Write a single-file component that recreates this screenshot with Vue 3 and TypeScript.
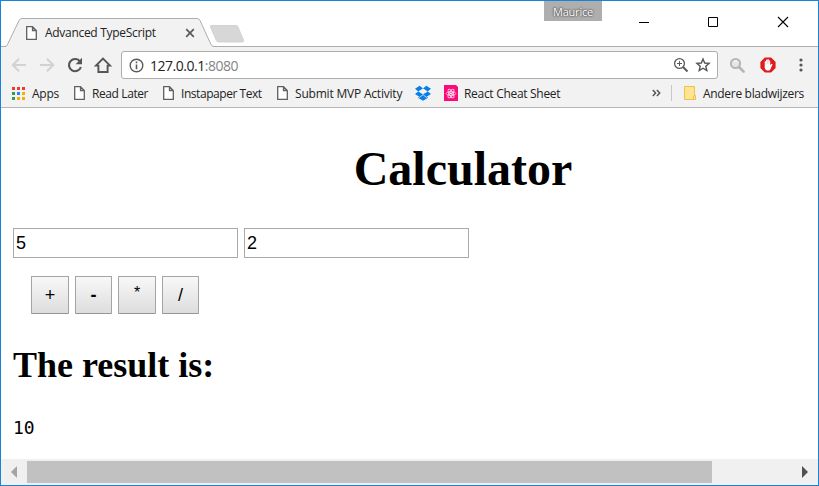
<script setup lang="ts">
import { ref } from 'vue'

interface Bookmark {
  label: string
  icon: 'apps' | 'page' | 'dropbox' | 'react'
  cls: string
}

const bookmarks: Bookmark[] = [
  { label: 'Apps', icon: 'apps', cls: 'b-apps' },
  { label: 'Read Later', icon: 'page', cls: 'b-read' },
  { label: 'Instapaper Text', icon: 'page', cls: 'b-insta' },
  { label: 'Submit MVP Activity', icon: 'page', cls: 'b-mvp' },
  { label: '', icon: 'dropbox', cls: 'b-dropbox' },
  { label: 'React Cheat Sheet', icon: 'react', cls: 'b-react' },
]

const appDots = ['#f03a2e', '#f03a2e', '#f03a2e', '#2f9e57', '#2a86f3', '#f9ad05', '#2f9e57', '#f9ad05', '#f9ad05']

const x = ref('5')
const y = ref('2')
const result = ref(10)

function calculate(op: string): void {
  const a = Number(x.value)
  const b = Number(y.value)
  if (op === '+') result.value = a + b
  else if (op === '-') result.value = a - b
  else if (op === '*') result.value = a * b
  else result.value = a / b
}
</script>

<template>
  <div class="window">
    <header class="titlebar">
      <div class="tab">
        <svg class="tab-shape" width="214" height="30" viewBox="0 0 214 30">
          <path d="M0 29 H5 L18 2.5 Q19 .5 21 .5 H196 Q198 .5 199 2.5 L210 27 Q211 28.5 213 28.5 H214 V30 H0Z" fill="#f2f2f2" />
          <path d="M0 28.5 H4 Q5.500 28.500 6.500 26.500 L18 2.500 Q19 .5 21 .5 H196 Q198 .5 199 2.500 L210 26.500 Q211 28.500 213 28.500 H214" fill="none" stroke="#adadad" />
        </svg>
        <svg class="page-icon" width="11" height="14" viewBox="0 0 11 14"><path d="M.7 .7H6.500L10.300 4.500V13.300H.7Z M6.500 .7V4.500H10.300" fill="#fff" stroke="#606060" stroke-width="1.300" /></svg>
        <span class="tab-title">Advanced TypeScript</span>
        <svg class="tab-close" width="10" height="10" viewBox="0 0 10 10"><path d="M1.200 1.200L8.800 8.800M8.800 1.200L1.200 8.800" stroke="#5a5a5a" stroke-width="1.700" /></svg>
      </div>
      <svg class="new-tab" width="36" height="18" viewBox="0 0 36 18">
        <path d="M2.500 .5H27Q28.500 .5 29 2L34.500 15Q35 17 33.500 17H9.500Q8 17 7.300 15.500L1.500 2Q1 .5 2.500 .5Z" fill="#d7d7d7" stroke="#cdcdcd" stroke-width=".8" />
      </svg>
      <span class="user">Maurice</span>
      <div class="controls">
        <svg width="12" height="12" viewBox="0 0 12 12"><path d="M1 6.500H11" stroke="#000" /></svg>
        <svg width="12" height="12" viewBox="0 0 12 12"><path d="M1.500 1.500H10.500V10.500H1.500Z" fill="none" stroke="#000" /></svg>
        <svg width="12" height="12" viewBox="0 0 12 12"><path d="M1 1L11 11M11 1L1 11" stroke="#000" stroke-width="1.100" /></svg>
      </div>
    </header>

    <div class="toolbar">
      <nav class="nav">
        <svg width="18" height="18" viewBox="0 0 18 18"><path d="M16 9H3M9 2.800L2.800 9L9 15.200" fill="none" stroke="#d2d2d2" stroke-width="2" /></svg>
        <svg width="18" height="18" viewBox="0 0 18 18"><path d="M2 9H15M9 2.800L15.200 9L9 15.200" fill="none" stroke="#d2d2d2" stroke-width="2" /></svg>
        <svg width="18" height="18" viewBox="0 0 18 18"><path d="M14.100 5.600A6.100 6.100 0 1 0 14.900 11" fill="none" stroke="#555" stroke-width="2.100" /><path d="M16 1.800V8.200H9.600Z" fill="#555" /></svg>
        <svg width="18" height="18" viewBox="0 0 18 18"><path d="M1.900 9.600L9 2.500L16.100 9.600H13.600V16H4.400V9.600Z" fill="none" stroke="#555" stroke-width="1.900" /></svg>
      </nav>
      <div class="address">
        <svg class="info" width="15" height="15" viewBox="0 0 15 15"><circle cx="7.500" cy="7.500" r="6.300" fill="none" stroke="#5a5a5a" stroke-width="1.400" /><path d="M7.500 6.500V11.300M7.500 3.600V5.300" stroke="#5a5a5a" stroke-width="1.600" /></svg>
        <span class="url">127.0.0.1<span class="port">:8080</span></span>
        <svg class="zoom" width="16" height="16" viewBox="0 0 16 16"><circle cx="6.500" cy="6.500" r="4.900" fill="none" stroke="#5a5a5a" stroke-width="1.300" /><path d="M4 6.500H9M6.500 4V9" stroke="#5a5a5a" /><path d="M10 10L14.500 14.500" stroke="#5a5a5a" stroke-width="2" /></svg>
        <svg class="star" width="16" height="16" viewBox="0 0 16 16"><path d="M8 2L9.700 6L14.100 6.400L10.800 9.200L11.800 13.500L8 11.200L4.200 13.500L5.200 9.200L1.900 6.400L6.300 6Z" fill="none" stroke="#555" stroke-width="1.400" /></svg>
      </div>
      <svg class="ext-search" width="17" height="17" viewBox="0 0 17 17"><circle cx="6.500" cy="6.500" r="4.600" fill="#e6e6e6" stroke="#b5b5b5" stroke-width="2" /><path d="M5 4.200Q7 3 8.500 4.600" fill="none" stroke="#fff" /><path d="M10 10L14.600 14.600" stroke="#b5b5b5" stroke-width="2.700" stroke-linecap="round" /></svg>
      <svg class="ext-block" width="16" height="16" viewBox="0 0 16 16">
        <path d="M4.900 .4H11.100L15.600 4.900V11.100L11.100 15.600H4.900L.4 11.100V4.900Z" fill="#df1b1b" />
        <path d="M4.700 8V4.600Q5.300 3.600 6 4.600V3Q6.700 2 7.400 3V2.500Q8.100 1.500 8.800 2.500V3.700Q9.600 2.800 10.200 3.800V8.200L11.200 7Q12.300 6.600 12.500 7.400L10.300 12.500Q9.700 13.500 8.600 13.500H7Q5.300 13 4.700 11Z" fill="#fff" />
        <path d="M6 4.600V7.500M7.400 3V7.300M8.800 3.700V7.400" stroke="#efb5b5" stroke-width=".5" />
      </svg>
      <svg class="menu" width="4" height="14" viewBox="0 0 4 14"><circle cx="2" cy="2" r="1.600" fill="#555" /><circle cx="2" cy="7" r="1.600" fill="#555" /><circle cx="2" cy="12" r="1.600" fill="#555" /></svg>
    </div>

    <div class="bookmarks">
      <div v-for="b in bookmarks" :key="b.cls" class="bookmark" :class="b.cls">
        <svg v-if="b.icon === 'apps'" width="13" height="13" viewBox="0 0 13 13">
          <rect v-for="(c, i) in appDots" :key="i" :x="(i % 3) * 5" :y="Math.floor(i / 3) * 5" width="3" height="3" :fill="c" />
        </svg>
        <svg v-else-if="b.icon === 'page'" width="11" height="14" viewBox="0 0 11 14"><path d="M.7 .7H6.500L10.300 4.500V13.300H.7Z M6.500 .7V4.500H10.300" fill="#fff" stroke="#606060" stroke-width="1.300" /></svg>
        <svg v-else-if="b.icon === 'dropbox'" width="16" height="16" viewBox="0 0 16 16" fill="#087ee8">
          <path d="M4.700 .7L8 3.500L3.300 6.400L0 3.700ZM11.300 .7L16 3.700L12.700 6.400L8 3.500ZM3.300 6.400L8 9.300L4.700 12L0 9.100ZM12.700 6.400L16 9.100L11.300 12L8 9.300ZM8 10.100L11.300 12.800L12.700 11.900V12.900L8 15.700L3.300 12.900V11.900L4.700 12.800Z" />
          <path d="M8 3.700L12.400 6.400L8 9.100L3.600 6.400Z" fill="#f2f2f2" />
        </svg>
        <svg v-else width="14" height="16" viewBox="0 0 14 16">
          <path d="M0 0H12L14 2V16H0Z" fill="#fb0a78" />
          <g fill="none" stroke="#ffd5e8" stroke-width=".9"><ellipse cx="7" cy="8.500" rx="4.800" ry="1.900" /><ellipse cx="7" cy="8.500" rx="4.800" ry="1.900" transform="rotate(60 7 8.500)" /><ellipse cx="7" cy="8.500" rx="4.800" ry="1.900" transform="rotate(120 7 8.500)" /></g>
          <circle cx="7" cy="8.500" r="1" fill="#fff" />
        </svg>
        <span v-if="b.label">{{ b.label }}</span>
      </div>
      <svg class="more" width="9" height="8" viewBox="0 0 9 8"><path d="M.8 1L3.600 4L.8 7M4.900 1L7.700 4L4.900 7" fill="none" stroke="#555" stroke-width="1.500" /></svg>
      <i class="divider"></i>
      <div class="bookmark b-other">
        <svg width="12" height="14" viewBox="0 0 12 14"><path d="M.5 .5H10.500V9.500H11.500V13.500H.5Z" fill="#ffe493" stroke="#eac34c" /><path d="M9.500 13V10L10.500 9.500" fill="none" stroke="#eac34c" /></svg>
        <span>Andere bladwijzers</span>
      </div>
    </div>

    <main class="page">
      <h1>Calculator</h1>
      <div class="inputs">
        <input v-model="x" type="text">
        <input v-model="y" type="text">
      </div>
      <div class="ops">
        <button class="wide" @click="calculate('+')">+</button>
        <button class="minus" @click="calculate('-')">-</button>
        <button class="wide times" @click="calculate('*')">*</button>
        <button @click="calculate('/')">/</button>
      </div>
      <h2>The result is:</h2>
      <pre>{{ result }}</pre>
    </main>

    <footer class="scrollbar">
      <svg class="arrow-left" width="6" height="12" viewBox="0 0 6 12"><path d="M6 0V12L0 6Z" fill="#a3a3a3" /></svg>
      <div class="thumb"></div>
      <svg class="arrow-right" width="6" height="12" viewBox="0 0 6 12"><path d="M0 0V12L6 6Z" fill="#505050" /></svg>
    </footer>
  </div>
</template>

<style>
body { margin: 0; overflow: hidden; }
</style>

<style scoped>
* { box-sizing: border-box; }
svg { display: block; flex: none; }
.window {
  width: 819px;
  height: 486px;
  border: 1px solid #1883d7;
  background: #fff;
  display: flex;
  flex-direction: column;
  font-family: "Open Sans", "Noto Sans", sans-serif;
  font-size: 12px;
  color: #222;
  overflow: hidden;
}
.titlebar {
  height: 46px;
  flex: none;
  display: flex;
  align-items: flex-start;
  border-bottom: 1px solid #adadad;
}
.tab {
  position: relative;
  width: 214px;
  height: 29px;
  margin-top: 17px;
  padding-left: 25px;
  display: flex;
  align-items: center;
}
.tab-shape { position: absolute; left: 0; top: 0; }
.page-icon, .tab-title, .tab-close { position: relative; }
.tab-title { margin-left: 8px; width: 111px; letter-spacing: -.3px; white-space: nowrap; }
.tab-close { margin-left: 29px; }
.new-tab { margin: 24px 0 0 -6px; }
.user {
  width: 58px;
  height: 20px;
  margin-left: 299px;
  background: #aeaeae;
  color: #fff;
  font-size: 11px;
  line-height: 21px;
  text-align: center;
  letter-spacing: -.2px;
  text-shadow: 0 0 2px #333, 0 0 2px #555;
}
.controls { display: flex; gap: 57px; padding: 15px 0 0 36px; }
.controls svg:last-child { margin-left: 1px; }
.toolbar {
  height: 36px;
  flex: none;
  display: flex;
  align-items: center;
  background: #f2f2f2;
  padding-left: 9px;
}
.nav { display: flex; gap: 10px; }
.address {
  width: 597px;
  height: 28px;
  margin-left: 9px;
  border: 1px solid #adadad;
  border-radius: 3px;
  background: #fff;
  display: flex;
  align-items: center;
  padding-left: 7px;
}
.url { margin-left: 6px; width: 89px; font-size: 14px; letter-spacing: -.48px; white-space: nowrap; }
.port { color: #858585; }
.zoom { margin-left: 434px; }
.star { margin-left: 6px; }
.ext-search { margin-left: 11px; }
.ext-block { margin-left: 14px; }
.menu { margin-left: 23px; }
.bookmarks {
  height: 25px;
  flex: none;
  display: flex;
  align-items: center;
  background: #f2f2f2;
  border-bottom: 1px solid #b6b6b6;
  padding: 0 0 4px 11px;
}
.bookmark { display: flex; align-items: center; white-space: nowrap; flex: none; }
.bookmark span { line-height: 16px; padding-top: 1px; }
.b-apps { width: 62px; letter-spacing: -.25px; }
.b-apps span { margin-left: 7px; }
.b-read svg, .b-insta svg, .b-mvp svg { margin-right: 7px; }
.b-read { width: 89px; letter-spacing: -.4px; }
.b-insta { width: 114px; letter-spacing: -.45px; }
.b-mvp { width: 138px; letter-spacing: -.2px; }
.b-dropbox { width: 29px; }
.b-react { width: 208px; letter-spacing: -.3px; }
.b-react svg { margin-right: 6px; }
.divider { width: 1px; height: 16px; background: #c8c8c8; margin: 0 12px 0 10px; }
.b-other { letter-spacing: -.31px; }
.b-other svg { margin-right: 7px; }
.page {
  flex: 1;
  min-height: 0;
  padding-left: 12px;
  color: #000;
  font-family: "Liberation Serif", serif;
}
h1 {
  margin: 33px 0 0;
  width: 900px;
  height: 56px;
  line-height: 56px;
  font-size: 48px;
  text-align: center;
}
.inputs { display: flex; gap: 6px; margin-top: 31px; }
input {
  width: 225px;
  height: 30px;
  border: 1px solid #a9a9a9;
  padding: 1px 2px;
  background: #fff;
  font: 18px "Liberation Sans", sans-serif;
  color: #000;
  outline: none;
}
.ops { display: flex; gap: 6px; margin: 18px 0 0 18px; }
button {
  width: 37px;
  height: 38px;
  padding: 0;
  border: 1px solid #a4a4a4;
  border-bottom-color: #969696;
  border-radius: 1px;
  background: linear-gradient(#f8f8f8, #dddddd);
  font: 18px "Liberation Sans", sans-serif;
  color: #000;
}
button.wide { width: 38px; }
button.minus { font-weight: bold; }
button.times { font-size: 16px; padding-bottom: 4px; }
h2 { margin: 30px 0 0; font-size: 36px; line-height: 42px; height: 42px; }
pre { margin: 31px 0 0; font: 18px/22px "DejaVu Sans Mono", monospace; }
.scrollbar {
  height: 26px;
  flex: none;
  background: #f0f0f0;
  display: flex;
  align-items: center;
  padding-left: 10px;
}
.thumb { width: 685px; height: 22px; margin-left: 10px; background: #c1c1c1; }
.arrow-right { margin-left: 90px; }
</style>
